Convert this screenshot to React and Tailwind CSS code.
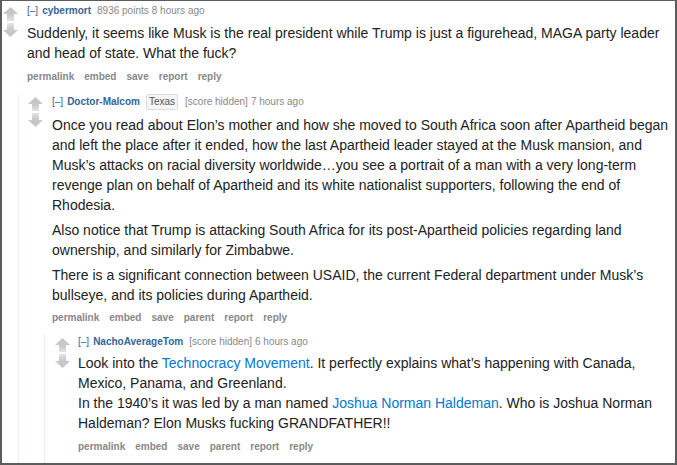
import React from 'react';

const Arrow = ({ down, id }) => (
  <svg width="15" height="14" viewBox="0 0 15 14" className="block">
    <defs>
      <linearGradient id={id} x1="0" y1={down ? '1' : '0'} x2="0" y2={down ? '0' : '1'}>
        <stop offset="0" stopColor="#c4c4c4" />
        <stop offset="0.55" stopColor="#c8c8c8" />
        <stop offset="1" stopColor="#e4e4e4" />
      </linearGradient>
    </defs>
    <path
      d={down ? 'M7.5 14 L15 7 L11 7 L11 0 L4 0 L4 7 L0 7 Z' : 'M7.5 0 L15 7 L11 7 L11 14 L4 14 L4 7 L0 7 Z'}
      fill={`url(#${id})`}
    />
  </svg>
);

const Votes = ({ name }) => (
  <div className="flex flex-col gap-[2px] w-[15px] shrink-0 pt-[3px]">
    <Arrow id={name + 'u'} />
    <Arrow id={name + 'd'} down />
  </div>
);

const Buttons = ({ parent, tight }) => {
  const items = parent
    ? ['permalink', 'embed', 'save', 'parent', 'report', 'reply']
    : ['permalink', 'embed', 'save', 'report', 'reply'];
  return (
    <div className={(tight ? 'mt-[6px] ' : 'mt-[7px] ') + 'flex gap-[10px] text-[10px] leading-[14px] font-bold text-[#888]'}>
      {items.map((b) => (
        <span key={b}>{b}</span>
      ))}
    </div>
  );
};

const Tagline = ({ author, flair, score, time }) => (
  <div className="text-[10px] leading-[14px] text-[#888] flex items-center whitespace-nowrap">
    <span className="text-[#369] mr-[4px]">[–]</span>
    <span className="text-[#369] font-bold mr-[6px]">{author}</span>
    {flair && (
      <span className="bg-[#f5f5f5] border border-[#ddd] rounded-[2px] text-[#545454] px-[2px] leading-[14px] mr-[7px]">
        {flair}
      </span>
    )}
    <span>{score}</span>
    <span className="ml-[3px]">{time}</span>
  </div>
);

export default function App() {
  return (
    <div
      className="w-[677px] h-[465px] bg-white border-t border-l-2 border-r-2 border-b-2 border-[#5c5c5c] overflow-hidden text-[#222]"
      style={{ fontFamily: '"Liberation Sans", Arial, sans-serif' }}
    >
      {/* comment 1 */}
      <div className="flex gap-[9px] pl-[1px] pt-[3px] pr-[11px]">
        <Votes name="c1" />
        <div className="flex-1">
          <Tagline author="cybermort" score="8936 points" time="8 hours ago" />
          <div className="text-[14px] leading-[20px] mt-[5px]">
            Suddenly, it seems like Musk is the real president while Trump is just a figurehead, MAGA party leader and head of state. What the fuck?
          </div>
          <Buttons />
        </div>
      </div>

      {/* comment 2 */}
      <div className="ml-[16px] mt-[10px] border-l border-dotted border-[#ddf]">
        <div className="flex gap-[9px] pl-[9px] pr-[2px]">
          <Votes name="c2" />
          <div className="flex-1 min-w-0">
            <Tagline author="Doctor-Malcom" flair="Texas" score="[score hidden]" time="7 hours ago" />
            <div className="text-[14px] leading-[20px] mt-[5px] flex flex-col gap-[5px]">
              <p className="whitespace-nowrap">
                Once you read about Elon’s mother and how she moved to South Africa soon after Apartheid began
                <br />
                and left the place after it ended, how the last Apartheid leader stayed at the Musk mansion, and
                <br />
                Musk’s attacks on racial diversity worldwide…you see a portrait of a man with a very long-term
                <br />
                revenge plan on behalf of Apartheid and its white nationalist supporters, following the end of
                <br />
                Rhodesia.
              </p>
              <p className="pr-[9px]">
                Also notice that Trump is attacking South Africa for its post-Apartheid policies regarding land ownership, and similarly for Zimbabwe.
              </p>
              <p className="pr-[9px]">
                There is a significant connection between USAID, the current Federal department under Musk’s bullseye, and its policies during Apartheid.
              </p>
            </div>
            <Buttons parent tight />
          </div>
        </div>

        {/* comment 3 */}
        <div className="ml-[25px] mt-[10px] border-l border-dotted border-[#ddf] h-[200px]">
          <div className="flex gap-[8px] pl-[10px] pr-[11px]">
            <Votes name="c3" />
            <div className="flex-1">
              <Tagline author="NachoAverageTom" score="[score hidden]" time="6 hours ago" />
              <div className="text-[14px] leading-[20px] mt-[4px]">
                Look into the <span className="text-[#0079d3]">Technocracy Movement</span>. It perfectly explains what’s happening with Canada, Mexico, Panama, and Greenland.
                <br />
                In the 1940’s it was led by a man named <span className="text-[#0079d3]">Joshua Norman Haldeman</span>. Who is Joshua Norman Haldeman? Elon Musks fucking GRANDFATHER!!
              </div>
              <Buttons parent />
            </div>
          </div>
        </div>
      </div>
    </div>
  );
}
